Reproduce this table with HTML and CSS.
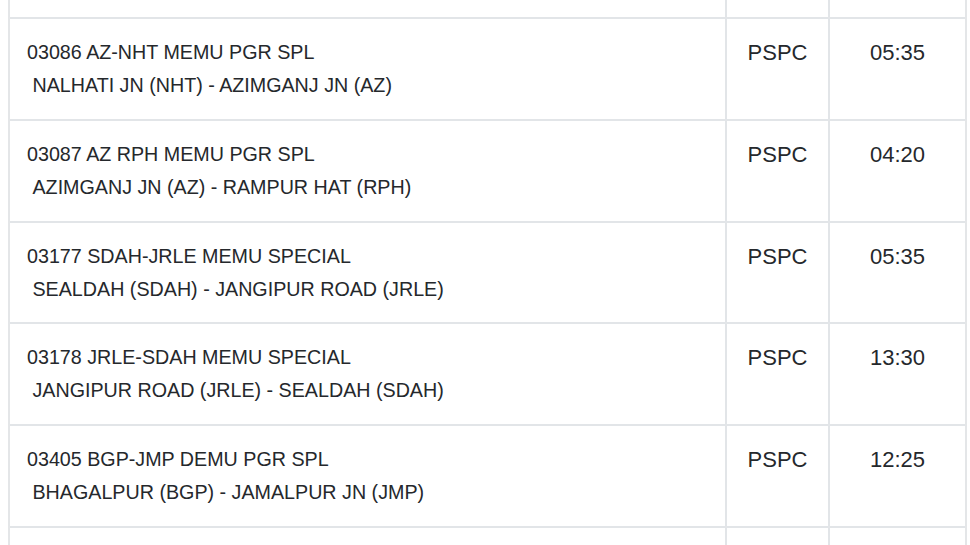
FILE: index.html
```html
<!DOCTYPE html>
<html lang="en">
<head>
<meta charset="utf-8">
<title>Train list</title>
<link rel="stylesheet" href="styles.css">
</head>
<body>
<div class="table">
  <div class="row row-top">
    <div class="cell"></div><div class="cell"></div><div class="cell"></div>
  </div>
  <div class="row">
    <div class="cell name"><div>03086 AZ-NHT MEMU PGR SPL</div><div>&nbsp;NALHATI JN (NHT) - AZIMGANJ JN (AZ)</div></div>
    <div class="cell mid">PSPC</div>
    <div class="cell mid">05:35</div>
  </div>
  <div class="row">
    <div class="cell name"><div>03087 AZ RPH MEMU PGR SPL</div><div>&nbsp;AZIMGANJ JN (AZ) - RAMPUR HAT (RPH)</div></div>
    <div class="cell mid">PSPC</div>
    <div class="cell mid">04:20</div>
  </div>
  <div class="row">
    <div class="cell name"><div>03177 SDAH-JRLE MEMU SPECIAL</div><div>&nbsp;SEALDAH (SDAH) - JANGIPUR ROAD (JRLE)</div></div>
    <div class="cell mid">PSPC</div>
    <div class="cell mid">05:35</div>
  </div>
  <div class="row">
    <div class="cell name"><div>03178 JRLE-SDAH MEMU SPECIAL</div><div>&nbsp;JANGIPUR ROAD (JRLE) - SEALDAH (SDAH)</div></div>
    <div class="cell mid">PSPC</div>
    <div class="cell mid">13:30</div>
  </div>
  <div class="row">
    <div class="cell name"><div>03405 BGP-JMP DEMU PGR SPL</div><div>&nbsp;BHAGALPUR (BGP) - JAMALPUR JN (JMP)</div></div>
    <div class="cell mid">PSPC</div>
    <div class="cell mid">12:25</div>
  </div>
  <div class="row row-bottom">
    <div class="cell"></div><div class="cell"></div><div class="cell"></div>
  </div>
</div>
</body>
</html>
```

FILE: styles.css
```css
html, body {
  margin: 0;
  padding: 0;
  background: #ffffff;
  overflow: hidden;
  height: 545px;
}

body {
  font-family: "Liberation Sans", Arial, sans-serif;
  color: #25282c;
}

.table {
  margin-left: 8px;
  width: 955px;
  border-left: 2px solid #e4e6e8;
  border-right: 2px solid #e4e6e8;
}

.row {
  display: grid;
  grid-template-columns: 717px 103px 135px;
  height: 101.8px;
  box-sizing: border-box;
  border-bottom: 2px solid #e2e5e8;
}

.row-top {
  height: 19px;
}

.row-bottom {
  height: 17px;
  border-bottom: none;
}

.cell {
  border-right: 2px solid #e2e5e8;
  box-sizing: border-box;
  padding-top: 17px;
  line-height: 33px;
}

.cell:last-child {
  border-right: none;
}

.name {
  padding-left: 17px;
  font-size: 19.7px;
  white-space: nowrap;
}

.mid {
  text-align: center;
  font-size: 22px;
}
```
